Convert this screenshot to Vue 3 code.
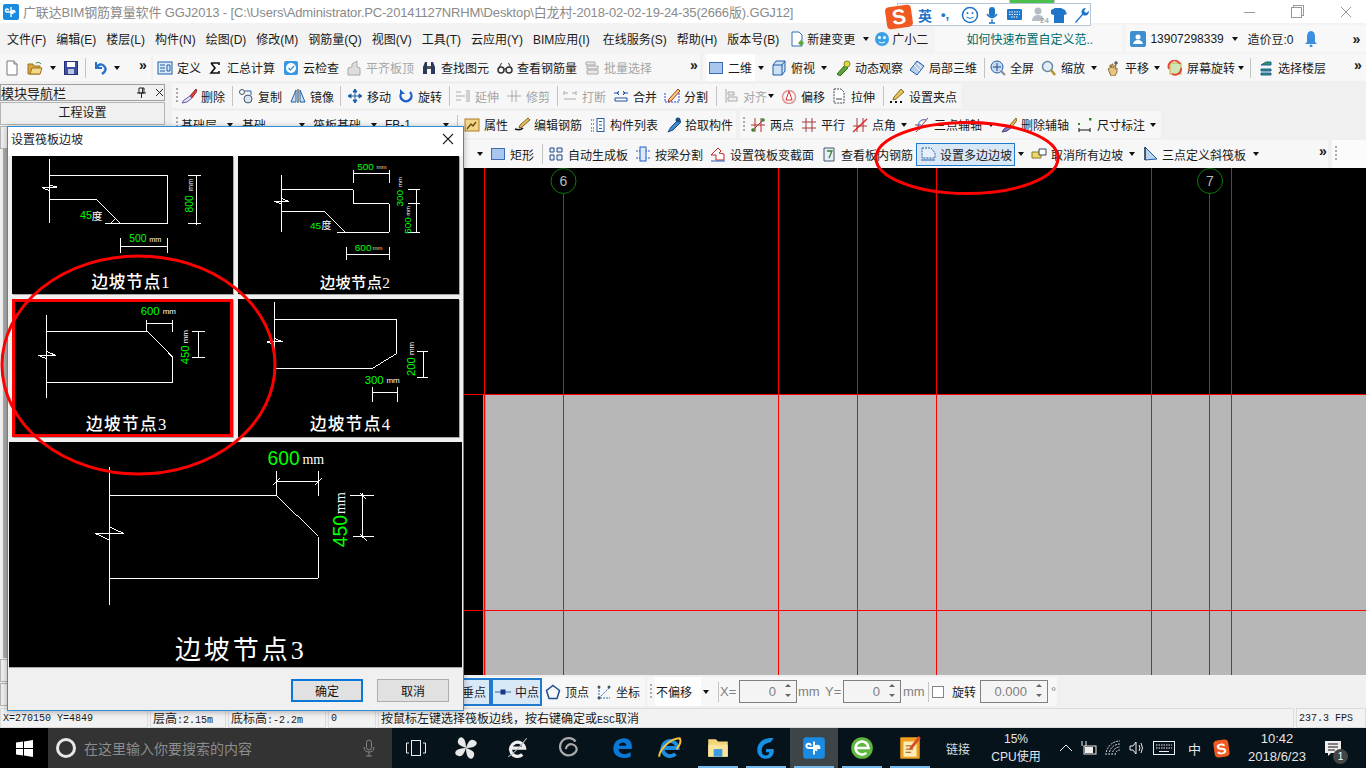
<script setup>
// small helpers for the toolbar tables, x is where the item starts on screen
const t = (x, i, text, o = {}) => ({ x, i, text, ...o })
const off = (x, i, text) => t(x, i, text, { cls: 'dis' })
const a = (x) => ({ x, cls: 'arr' })
const s = (x) => ({ x, cls: 'sep' })
const g = (x) => ({ x, cls: 'grip' })
const m = (x) => ({ x, cls: 'more' })
const inp = (x, val, w) => ({ x, val, w, cls: 'inp' })

function place(start, bars) {
  let cur = start
  return bars.map((b) => {
    const items = b.items.map((it, n) => {
      const next = n + 1 < b.items.length ? b.items[n + 1].x : b.end
      const w = it.w ?? next - it.x
      return { ...it, w, mr: next - it.x - w }
    })
    const out = { ...b, items, ml: b.x - cur, pad: items[0].x - b.x, width: b.end - b.x }
    cur = b.end
    return out
  })
}

const rows = [
  { cls: 'r1', bars: place(0, [
    { x: 0, end: 151, items: [t(4, 'new'), t(27, 'open'), a(50), t(63, 'save'), s(85), t(92, 'undo'), a(114), m(139)] },
    { x: 153, end: 700, items: [
      t(157, 'define', '定义'), t(207, 'sigma', '汇总计算'), t(283, 'cloud', '云检查'), off(346, 'flush', '平齐板顶'),
      t(421, 'binoc', '查找图元'), t(497, 'glass', '查看钢筋量'), off(584, 'batch', '批量选择'), m(690)] },
    { x: 703, end: 1366, items: [
      t(707, 'square', '二维', { cls: 'white', w: 48 }), a(758), t(771, 'cube', '俯视'), a(821), t(835, 'orbit', '动态观察'),
      t(909, 'local', '局部三维'), s(984), t(990, 'full', '全屏'), t(1041, 'zoom', '缩放'), a(1091), t(1105, 'hand', '平移'), a(1154),
      t(1167, 'turn', '屏幕旋转'), a(1238), s(1250), t(1258, 'floors', '选择楼层'), m(1354)] },
  ]) },
  { cls: 'r2', bars: place(165, [
    { x: 172, end: 961, items: [
      g(176), t(181, 'brush', '删除'), s(232), t(238, 'copy', '复制'), t(290, 'mirror', '镜像'), s(340), t(347, 'move', '移动'),
      t(398, 'rotate', '旋转'), s(449), off(455, 'extend', '延伸'), off(506, 'trim', '修剪'), s(557), off(562, 'break', '打断'),
      t(613, 'merge', '合并'), t(664, 'split', '分割'), s(716), off(723, 'align', '对齐'), a(768), t(781, 'offset', '偏移'),
      t(831, 'stretch', '拉伸'), s(883), t(889, 'gripp', '设置夹点')] },
  ]) },
  { cls: 'r3', bars: place(165, [
    { x: 172, end: 736, items: [
      g(176), t(181, null, '基础层'), a(227), t(242, null, '基础'), a(299), t(313, null, '筏板基础'), a(371), t(385, null, 'FB-1'), a(443), s(457),
      t(464, 'attr', '属性'), t(514, 'rebar', '编辑钢筋'), t(590, 'list', '构件列表'), t(665, 'pick', '拾取构件')] },
    { x: 740, end: 1161, items: [
      g(743), t(750, 'twopt', '两点'), t(801, 'para', '平行'), t(852, 'angle', '点角'), a(901), t(914, 'three', '三点辅轴'), a(988),
      t(1001, 'delax', '删除辅轴'), t(1077, 'dim', '尺寸标注'), a(1150)] },
  ]) },
  { cls: 'r4', bars: place(165, [
    { x: 172, end: 1328, items: [
      a(477), t(490, 'square', '矩形'), s(542), t(548, 'auto', '自动生成板'), t(635, 'beam', '按梁分割'), t(710, 'varsec', '设置筏板变截面'),
      t(821, 'view', '查看板内钢筋'), t(916, 'slope', '设置多边边坡', { cls: 'on', w: 99 }), a(1018), t(1031, 'cancel', '取消所有边坡'), a(1129),
      t(1142, 'tri', '三点定义斜筏板'), a(1253), m(1319)] },
    { x: 1332, end: 1366, cls: 'pale', items: [g(1335)] },
  ]) },
  { cls: 'r5', bars: place(165, [
    { x: 440, end: 645, items: [
      t(440, null, '垂点', { cls: 'on snap', w: 51 }), t(491, 'mid', '中点', { cls: 'on', w: 51 }), t(545, 'vertex', '顶点'), t(596, 'coord', '坐标')] },
    { x: 647, end: 1057, items: [
      g(650), t(655, null, '不偏移', { cls: 'white', w: 46 }), a(703), s(718), t(720, null, 'X=', { cls: 'gr' }), inp(739, '0', 58),
      t(798, null, 'mm', { cls: 'gr' }), t(825, null, 'Y=', { cls: 'gr' }), inp(843, '0', 58), t(903, null, 'mm', { cls: 'gr' }), s(928),
      { x: 932, cls: 'chk', w: 12 }, t(952, null, '旋转'), inp(980, '0.000', 68), t(1051, null, '°', { cls: 'gr' })] },
  ]) },
]

const menus = ['文件(F)', '编辑(E)', '楼层(L)', '构件(N)', '绘图(D)', '修改(M)', '钢筋量(Q)', '视图(V)', '工具(T)', '云应用(Y)', 'BIM应用(I)', '在线服务(S)', '帮助(H)', '版本号(B)']

const b = '#1f5fa8', k = '#333', gy = '#aaa'
const icons = {
  new: '<path d="M3 1h7l3 3v11H3z" fill="#fff" stroke="#777"/><path d="M10 1v3h3" fill="#ddd" stroke="#777"/>',
  open: '<path d="M1 4h5l1 2h6v8H1z" fill="#d9a53c" stroke="#9a7420"/><path d="M3 14l2-6h10l-2 6z" fill="#f5d788" stroke="#9a7420"/><path d="M9 3q3-2 5 1" fill="none" stroke="#3a8a3a"/>',
  save: '<rect x="1.5" y="1.5" width="13" height="13" fill="#3d4ea5" stroke="#262f75"/><rect x="4" y="2" width="8" height="5" fill="#fff"/><rect x="5" y="9" width="6" height="5" fill="#b9c5e2"/>',
  undo: `<path d="M4 2v6h6" fill="none" stroke="#2a70c8" stroke-width="2"/><path d="M4 8q4-6 8-2t-2 8" fill="none" stroke="#2a70c8" stroke-width="2.4"/>`,
  define: `<rect x="1" y="2" width="14" height="12" fill="#dce8f6" stroke="${b}"/><path d="M3 5h5M3 8h5M3 11h5M10 5h3v6h-3z" fill="none" stroke="${b}"/>`,
  sigma: `<path d="M4 3h8v2M4 3l4 5-4 5h8v-2" fill="none" stroke="#111" stroke-width="1.6"/>`,
  cloud: '<rect x="1" y="1" width="14" height="14" rx="2" fill="#3a97e0"/><circle cx="8" cy="8" r="5" fill="#fff"/><path d="M5.5 8l2 2 3.5-4" fill="none" stroke="#3a97e0" stroke-width="1.4"/>',
  flush: `<path d="M2 15V8l4-1V4l5-3v6l3 1v7z" fill="#ddd" stroke="${gy}"/>`,
  binoc: `<path d="M2 14V7l2-5h2v12zM14 14V7l-2-5h-2v12z" fill="#2b3a5a"/><path d="M6 6h4v3H6z" fill="#555"/>`,
  glass: `<circle cx="4" cy="10" r="3" fill="none" stroke="${k}" stroke-width="1.5"/><circle cx="12" cy="10" r="3" fill="none" stroke="${k}" stroke-width="1.5"/><path d="M7 9h2M1.500 9l3-6M14.500 9l-3-6" stroke="${k}" fill="none"/>`,
  batch: `<path d="M2 2h9v3H2zM3 6h11v3H3zM3 10h11v4H3z" fill="#e8e8e8" stroke="${gy}"/>`,
  square: '<rect x="1.500" y="2.500" width="13" height="11" fill="#a9c6ee" stroke="#3a6db5"/>',
  cube: `<path d="M2 5l3-4h9v10l-3 4H2z" fill="#cfe0f2" stroke="${b}"/><path d="M2 5h9v10M11 5l3-4" fill="none" stroke="${b}"/>`,
  orbit: '<path d="M2 14l8-9 3 3-8 8z" fill="#5da53a" stroke="#2f6f1e"/><circle cx="12" cy="4" r="3" fill="#e2d94a" stroke="#7b8a1e"/>',
  local: `<path d="M8 1l7 5-7 9-7-5z" fill="#b8cfea" stroke="${b}"/><path d="M4 4l7 7M8 3l5 5" stroke="#fff"/>`,
  full: `<circle cx="7" cy="7" r="6" fill="#c8daf0" stroke="${b}"/><path d="M7 3v8M3 7h8" stroke="#1f4f8f"/><path d="M11 11l4 4" stroke="#888" stroke-width="2"/>`,
  zoom: `<circle cx="6.500" cy="6.500" r="5" fill="#e3edf8" stroke="#6d87a5" stroke-width="1.500"/><path d="M10 10l4 5" stroke="#b3942f" stroke-width="2.500"/>`,
  hand: '<path d="M3 9l2-1V5h1v3l1-4h1v4l2-3h1l-1 4 2-1v4l-2 4H6z" fill="#e2c285" stroke="#94733a"/><path d="M11 1v4M9 3h4" stroke="#333"/>',
  turn: '<rect x="3" y="3" width="11" height="11" fill="#cfe6b8" stroke="#c9a63a"/><path d="M2 9a6 6 0 0 1 11-5" fill="none" stroke="#e0463c" stroke-width="1.800"/><path d="M14 8a6 6 0 0 1-9 6" fill="none" stroke="#e0463c" stroke-width="1.800"/>',
  floors: `<path d="M3 5l5-3h5v3zM3 9h10v2H3zM3 13h10v2H3z" fill="#2f9a4c" stroke="${b}"/>`,
  brush: `<path d="M15 1l-6 7 2 2 5-7z" fill="#d44" stroke="#922"/><path d="M9 8l-6 4-2 3 5-1 5-4z" fill="#e6dff3" stroke="#6a5aa0"/>`,
  copy: `<circle cx="4" cy="4" r="2.500" fill="none" stroke="#456"/><circle cx="10" cy="11" r="4" fill="#dbe6f3" stroke="#456"/><path d="M7 3h6v4" fill="none" stroke="${b}"/>`,
  mirror: `<path d="M6 2v12H1zM10 2v12h5z" fill="#cfe0f2" stroke="${b}"/><path d="M8 1v14" stroke="#333"/>`,
  move: `<path d="M8 1v14M1 8h14M8 1L6 4h4zM8 15l-2-3h4zM1 8l3-2v4zM15 8l-3-2v4z" fill="${b}" stroke="${b}"/>`,
  rotate: '<path d="M12 4a5.500 5.500 0 1 1-8 0" fill="none" stroke="#1f5fc8" stroke-width="2.400"/><path d="M2 1v5h5z" fill="#1f5fc8"/>',
  extend: `<path d="M1 4h5M1 8h9M1 12h5M12 2v12M14 2v12" stroke="${gy}" fill="none"/>`,
  trim: `<path d="M1 8h14M6 2v12M10 2v12" stroke="${gy}" fill="none"/>`,
  break: `<path d="M2 5h4M10 5h4M2 11h12M2 3v4M14 3v4" stroke="${gy}" fill="none"/>`,
  merge: `<path d="M1 5h5M10 5h5M6 3l-2 2 2 2M10 3l2 2-2 2" stroke="#1a4fa0" fill="none"/><path d="M2 10h12v3H2z" fill="#fff" stroke="#1a4fa0"/>`,
  split: '<path d="M1 14h14M1 5v9M15 5v9" stroke="#1a4fe0" fill="none" stroke-dasharray="2 1"/><path d="M14 1l-9 10-1 3 3-1 9-10z" fill="#f1d37a" stroke="#a33"/>',
  align: `<path d="M3 1v14M5 4h6v3H5zM5 9h9v4H5z" stroke="${gy}" fill="#eee"/>`,
  offset: '<path d="M5 12l3-9 3 9z" fill="#fff" stroke="#d33"/><circle cx="8" cy="9" r="6.500" fill="none" stroke="#d99" stroke-width="1.500"/>',
  stretch: `<path d="M3 1h7l3 3v11H3z" fill="#fff" stroke="#345" stroke-dasharray="2 1"/><path d="M5 11h6" stroke="#345"/>`,
  gripp: '<path d="M12 1l3 3-8 7-3 1 1-3z" fill="#e6c25a" stroke="#8a6a20"/><path d="M1 14h2M6 14h2M11 14h2" stroke="#111" stroke-width="2"/>',
  attr: '<rect x="1" y="2" width="14" height="12" fill="#f3d588" stroke="#a97c26"/><path d="M3 12l4-5 2 2 3-4" fill="none" stroke="#6b4a12" stroke-width="1.400"/>',
  rebar: '<path d="M1 12c3 1 6 1 8-1" fill="none" stroke="#111" stroke-width="1.400"/><path d="M14 1l2 2-8 7-3 1 1-3z" fill="#e3bd5e" stroke="#8b5f1d"/>',
  list: `<path d="M1 3h3M1 7h3M1 11h3M1 14h3" stroke="${k}" stroke-dasharray="1 1" fill="none"/><rect x="7" y="1.500" width="7" height="13" fill="#fff" stroke="${b}"/><path d="M9 4.500h3M9 8h3M9 11.500h3" stroke="${b}"/>`,
  pick: `<path d="M14 2l-8 8-3 5 5-2 8-8z" fill="#3f8bd0" stroke="#1a4f80"/><circle cx="13" cy="3" r="2.500" fill="#1a4f80"/>`,
  twopt: `<path d="M2 14L14 2M5 1v14M11 1v14M1 8h14" stroke="#b03030" fill="none"/><circle cx="3" cy="13" r="1.800" fill="#2c8a2c"/><circle cx="13" cy="3" r="1.800" fill="#2c8a2c"/>`,
  para: '<path d="M5 1v14M11 1v14M1 5h14M1 11h14" stroke="#a43a3a" fill="none"/>',
  angle: '<path d="M5 1v14M11 1v14M1 9h14" stroke="#a43a3a" fill="none"/><path d="M1 15L15 2" stroke="#e02020" stroke-width="1.300"/>',
  three: '<path d="M2 15L14 1M1 8h6" stroke="#a43a3a" fill="none"/><path d="M6 13A6 6 0 0 1 12 3" fill="none" stroke="#1f5fc8"/>',
  delax: '<path d="M15 1l-6 7 2 2 5-7z" fill="#e3bd5e" stroke="#8b5f1d"/><path d="M9 8l-6 4-2 3 5-1 5-4z" fill="#8e7ac0" stroke="#4a3a80"/>',
  dim: `<path d="M2 11v4M13 11v4M2 13h11" stroke="#111" fill="none"/><rect x="1" y="6" width="2" height="2" fill="#2c8a2c"/><rect x="12" y="1" width="2.500" height="2.500" fill="#2c8a2c"/>`,
  auto: `<path d="M2 2h4v4H2zM9 2h5v4H9zM2 9h4v5H2zM9 9h5v5H9z" fill="#e8eef7" stroke="#234a86"/>`,
  beam: `<path d="M1 5h14M1 12h14" stroke="#1a5fc8" stroke-dasharray="2 1" fill="none"/><rect x="5" y="1" width="6" height="14" fill="#dce8f6" stroke="#1a5fc8"/>`,
  varsec: '<path d="M1 9l7-7 3 3-2 2 5 1v6H6V9z" fill="#fff" stroke="#c22"/><path d="M1 15h14" stroke="#1f5fc8"/>',
  view: `<path d="M3 2h10v13H3z" fill="#e6eef6" stroke="#456"/><path d="M6 5h5l-3 7" fill="none" stroke="#3a7a3a" stroke-width="1.300"/>`,
  slope: '<path d="M2 2h9l4 5v5H2z" fill="#e6f0fb" stroke="#2a5f9f" stroke-dasharray="2 1"/><path d="M1 14h14" stroke="#2a5f9f"/>',
  cancel: '<path d="M1 6h9v6H1z" fill="#ecd76a" stroke="#8b7a20"/><path d="M8 3h7v6H8z" fill="#fff" stroke="#345"/>',
  tri: `<path d="M3 1v13l12-1z" fill="#b9d2ee" stroke="${b}"/><path d="M3 1v13" stroke="#111"/>`,
  mid: '<path d="M0 8h16" stroke="#6d8fc0" stroke-width="1.500"/><rect x="5.500" y="5.500" width="5" height="5" fill="#16378a"/>',
  vertex: `<path d="M8 1.500l6.500 5-2.500 8H4l-2.500-8z" fill="none" stroke="#1a4f90" stroke-width="1.500"/>`,
  coord: `<path d="M3 14l10-10M3 3v11h11" stroke="#2a6fc0" stroke-dasharray="2 1" fill="none"/><circle cx="3" cy="3" r="1.500" fill="#456"/><circle cx="13" cy="3" r="1.500" fill="#456"/><circle cx="3" cy="14" r="1.500" fill="#456"/>`,
}

// drawings use the same numbers as the reference crop at 3x, hence stroke 3
const thumbs = [
  { vb: '36 92 663 415', d: 'M148 102V293M148 151H503V295H316M148 223H290L360 295M124 187H172M148 180L172 186M124 187L148 196M333 293L347 279M361 340V383M503 340V383M361 365H503M590 150V298M565 151H605M565 295H605',
    tx: [{ t: '45', x: 240, y: 281, s: 32, c: '#0f0' }, { t: '度', x: 275, y: 283, s: 32 }, { t: '500', x: 388, y: 351, s: 31, c: '#0f0' }, { t: 'mm', x: 448, y: 351, s: 22 }, { t: '800', x: 581, y: 262, s: 31, c: '#0f0', r: 1 }, { t: 'mm', x: 580, y: 197, s: 22, r: 1 }],
    label: { t: '边坡节点1', x: 274, y: 490, s: 50, ls: 2.5 } },
  { vb: '714 92 664 415', d: 'M844 148V320M844 193H1060V235H1169V322H1012M844 259H975L1037 322M822 228H866M844 220L866 228M822 228L844 236M1060 135V172M1169 135V172M1060 146H1169M1039 365V404M1169 365V404M1039 388H1169M1250 190V325M1225 193H1262M1225 235H1262M1225 322H1262',
    tx: [{ t: '45', x: 930, y: 312, s: 30, c: '#0f0' }, { t: '度', x: 965, y: 313, s: 30 }, { t: '500', x: 1072, y: 135, s: 30, c: '#0f0' }, { t: 'mm', x: 1130, y: 131, s: 18, c: '#ffd9a0' }, { t: '600', x: 1065, y: 377, s: 30, c: '#0f0' }, { t: 'mm', x: 1118, y: 374, s: 18, c: '#ffd9a0' }, { t: '300', x: 1209, y: 244, s: 30, c: '#0f0', r: 1 }, { t: 'mm', x: 1207, y: 185, s: 18, r: 1 }, { t: '500', x: 1233, y: 326, s: 30, c: '#0f0', r: 1 }, { t: 'mm', x: 1232, y: 272, s: 18, r: 1 }],
    label: { t: '边坡节点2', x: 960, y: 490, s: 46, ls: 1 } },
  { vb: '36 522 663 414', sel: true, d: 'M139 570V818M139 619H442L518 696V772H139M115 691H167M139 679L167 691M115 691L139 701M440 585V620M518 585V620M440 594H518M595 619V698M575 619H615M575 698H615',
    tx: [{ t: '600', x: 422, y: 570, s: 34, c: '#0f0' }, { t: 'mm', x: 488, y: 566, s: 24 }, { t: '450', x: 568, y: 718, s: 34, c: '#0f0', r: 1 }, { t: 'mm', x: 565, y: 655, s: 24, r: 1 }],
    label: { t: '边坡节点3', x: 258, y: 916, s: 50, ls: 4 } },
  { vb: '714 522 664 414', d: 'M823 530V730M823 582H1190V686L1118 730H823M800 650H848M823 640L848 650M800 650L823 660M1117 785V830M1192 785V830M1117 802H1192M1271 680V757M1252 680H1286M1252 757H1286',
    tx: [{ t: '300', x: 1095, y: 776, s: 34, c: '#0f0' }, { t: 'mm', x: 1160, y: 774, s: 24 }, { t: '200', x: 1247, y: 753, s: 34, c: '#0f0', r: 1 }, { t: 'mm', x: 1244, y: 690, s: 24, r: 1 }],
    label: { t: '边坡节点4', x: 930, y: 916, s: 50, ls: 4 } },
]
const big = {
  vb: '28 6 1358 676', d: 'M328 82V497M328 166H830L956 290V415H328M286 281H372M330 262L372 281M286 281L328 300M830 93V168M956 93V168M830 125H956M820 135L840 115M946 135L966 115M1088 160V295M1050 166H1122M1060 290H1122M1080 158L1100 178M1080 282L1100 302',
  tx: [{ t: '600', x: 803, y: 76, s: 58, c: '#0f0' }, { t: 'mm', x: 908, y: 73, s: 42, f: 1 }, { t: '450', x: 1041, y: 322, s: 58, c: '#0f0', r: 1 }, { t: 'mm', x: 1036, y: 222, s: 42, r: 1, f: 1 }],
  label: { t: '边坡节点3', x: 525, y: 658, s: 78, ls: 9 },
}

const vLines = [[484, 168], [563, 194], [778, 168], [857, 168], [936, 168], [1151, 168], [1209, 194], [1231, 168]]
const axes = [{ x: 563.5, n: '6' }, { x: 1210, n: '7' }]

const tasks = [
  { ml: 0, svg: '<path d="M12 12C6 10 3 8 5 4s7-2 7 8zM12 12c2-6 4-9 8-7s2 7-8 7zM12 12c6 2 9 4 7 8s-7 2-7-8zM12 12c-2 6-4 9-8 7s-2-7 8-7z" fill="#e8e8e8"/>' },
  { ml: 4, svg: '<path d="M5 12h13a6.500 6.500 0 1 0-2 6" fill="none" stroke="#eee" stroke-width="3"/><path d="M3 20Q10 16 20 3" fill="none" stroke="#bbb" stroke-width="1"/>' },
  { ml: 2, svg: '<path d="M19 6A8 8 0 1 0 20 14 5 5 0 1 0 10 13" fill="none" stroke="#aaa" stroke-width="2"/>' },
  { ml: 6, svg: '<path d="M4 13C4 6 9 3 14 3c5 0 8 4 7 10H9c0 5 6 6 11 3v4c-8 3-16 0-16-7zM9 10h7c0-4-6-4-7 0z" fill="#0a78d7"/>' },
  { svg: '<path d="M5 12h14a7 7 0 1 0-2 5.500" fill="none" stroke="#1e8ee0" stroke-width="3.500"/><path d="M2 20C2 14 12 3 21 3c2 3-1 8-3 10" fill="none" stroke="#f2c43a" stroke-width="1.800"/>' },
  { run: 'run', svg: '<path d="M3 4h7l2 2h9v14H3z" fill="#f4d77a"/><path d="M3 9h18v11H3z" fill="#fbe59c"/><path d="M8 13h8v7H8z" fill="#3c9be0"/>' },
  { run: 'run', svg: '<path d="M19 3C10 2 4 7 4 14c0 5 4 8 8 8 5 0 8-4 7-9h-7v3h3c0 2-2 3-3 3-3 0-4-2-4-5 0-4 4-7 8-7l3-4z" fill="#1691e8"/>' },
  { run: 'run cur', svg: '<rect x="2" y="2" width="20" height="20" rx="3" fill="#1a8be0"/><path d="M12 6v12M12 12H7a2 2 0 1 1 2-2M12 12h5a2 2 0 1 0-2 2" fill="none" stroke="#fff" stroke-width="1.800"/>' },
  { run: 'run', svg: '<circle cx="12" cy="12" r="10" fill="#5fb73e"/><path d="M6 12h12a6 6 0 1 0-2 4.500" fill="none" stroke="#fff" stroke-width="2.400"/>' },
  { run: 'run', svg: '<rect x="3" y="2" width="18" height="20" rx="1" fill="#f0a020"/><rect x="6" y="6" width="12" height="14" fill="#fbedb8"/><path d="M8 10h7M8 13h7M8 16h5" stroke="#a87a30"/><path d="M20 1l2 2-8 10-3 1 1-3z" fill="#d8502a"/>' },
]
</script>

<template>
  <div class="page">
    <div class="title">
      <svg class="appicon" viewBox="0 0 16 16"><rect width="16" height="16" rx="2" fill="#1a8be0"/><path d="M8 3v10M8 8H4a1.500 1.500 0 1 1 1.500-1.500M8 8h4a1.500 1.500 0 1 0-1.500 1.500" fill="none" stroke="#fff" stroke-width="1.400"/></svg>
      <span class="title-txt">广联达BIM钢筋算量软件 GGJ2013 - [C:\Users\Administrator.PC-20141127NRHM\Desktop\白龙村-2018-02-02-19-24-35(2666版).GGJ12]</span>
      <div class="winbtns">
        <i class="min"></i>
        <i class="max"></i>
        <svg width="12" height="12" viewBox="0 0 12 12"><path d="M1 1l10 10M11 1L1 11" stroke="#999"/></svg>
      </div>
      <div class="greentab"></div>
      <div class="ime">
        <span class="s-logo">S</span>
        <b class="ime-en">英</b>
        <span class="ime-dot">•,</span>
        <svg width="132" height="20" viewBox="0 0 132 20" class="ime-icons">
          <circle cx="11" cy="10" r="7.500" fill="none" stroke="#1f76c8" stroke-width="1.500"/><circle cx="8.500" cy="8" r="1" fill="#1f76c8"/><circle cx="13.500" cy="8" r="1" fill="#1f76c8"/><path d="M7.500 12q3.500 3 7 0" fill="none" stroke="#1f76c8"/>
          <rect x="30" y="2" width="6" height="10" rx="3" fill="#1f76c8"/><path d="M28 9q5 7 10 0M33 14v4M30 18h6" fill="none" stroke="#1f76c8" stroke-width="1.300"/>
          <rect x="48" y="4" width="15" height="11" rx="1" fill="#1f76c8"/><path d="M50 7h11M50 9.500h11M52 12h7" stroke="#fff" stroke-dasharray="1.500 1"/>
          <circle cx="79" cy="6" r="3.500" fill="#b5bcc4"/><path d="M73 15q1-5 6-5t5 3v3H73z" fill="#b5bcc4"/><text x="81" y="18" font-size="8" fill="#8b939b" font-family="Liberation Sans">24</text>
          <path d="M92 5l4-2h6l4 2 2 4-3 1v8H95v-8l-3-1z" fill="#1f76c8"/>
          <path d="M116 17l7-8a4 4 0 0 1 4-6l-2 3 2 2 3-2a4 4 0 0 1-6 4l-7 8z" fill="#1f76c8"/>
        </svg>
      </div>
    </div>

    <div class="menubar">
      <span v-for="mi in menus" :key="mi" class="mi">{{ mi }}</span>
      <svg class="ic new-ic" viewBox="0 0 16 16"><path d="M3 1h7l3 3v11H3z" fill="#fff" stroke="#2a70b8"/><path d="M9 12l3-3 3 3-3 3z" fill="#5aa53a"/></svg>
      <span>新建变更</span>
      <i class="arrow gap-arrow"></i>
      <svg class="ic xiao" viewBox="0 0 16 16"><circle cx="8" cy="8" r="7" fill="#3aa0e8"/><circle cx="5.500" cy="6.500" r="1.500" fill="#fff"/><circle cx="10.500" cy="6.500" r="1.500" fill="#fff"/><path d="M5 11q3 2 6 0" stroke="#fff" fill="none"/></svg>
      <span>广小二</span>
      <div class="notice">如何快速布置自定义范..</div>
      <div class="account">
        <svg class="ic" viewBox="0 0 16 16"><rect width="16" height="16" rx="2" fill="#3f8fd0"/><circle cx="8" cy="6" r="2.500" fill="#fff"/><path d="M3 13q1-4 5-4t5 4z" fill="#fff"/></svg>
        <span class="acc-no">13907298339</span>
        <i class="arrow"></i>
        <span class="acc-beans">造价豆:0</span>
        <svg class="ic bell" viewBox="0 0 16 16"><path d="M8 0q4 0 4 6v5l2 2H2l2-2V6q0-6 4-6z" fill="#3a8fe0"/><circle cx="8" cy="15" r="1.500" fill="#3a8fe0"/></svg>
        <span class="acc-more">»</span>
      </div>
    </div>

    <div class="work">
      <aside class="side">
        <div class="side-head">
          <span>模块导航栏</span>
          <svg class="side-pin" width="9" height="11" viewBox="0 0 9 11"><path d="M2 1h5v5H2zM0 6h9M4.500 6v5M5.500 1v5" fill="none" stroke="#222"/></svg>
          <svg class="side-x" width="9" height="9" viewBox="0 0 9 9"><path d="M1 1l7 7M8 1L1 8" stroke="#222"/></svg>
        </div>
        <div class="side-btn">工程设置</div>
        <div class="side-btn"></div>
        <div class="side-list"></div>
        <div class="side-btn"></div>
        <div class="side-btn"></div>
      </aside>

      <div v-for="row in rows" :key="row.cls" class="row" :class="row.cls">
        <div
          v-for="bar in row.bars"
          :key="bar.x"
          class="bar"
          :class="bar.cls"
          :style="{ marginLeft: bar.ml + 'px', width: bar.width + 'px', paddingLeft: bar.pad + 'px' }"
        >
          <div
            v-for="it in bar.items"
            :key="it.x"
            class="item"
            :class="it.cls"
            :style="{ width: it.w + 'px', marginRight: it.mr + 'px' }"
          >
            <svg v-if="it.i" class="ic" viewBox="0 0 16 16" v-html="icons[it.i]"></svg>
            <span v-if="it.text">{{ it.text }}</span>
            <template v-if="it.val">
              <span class="val">{{ it.val }}</span>
              <span class="spin"><i></i><i></i></span>
            </template>
          </div>
        </div>
      </div>

      <div class="canvas">
        <svg width="1201" height="507" viewBox="165 168 1201 507" class="cad">
          <rect x="165" y="168" width="1201" height="507" fill="#000"/>
          <rect x="486" y="395" width="880" height="280" fill="#b7b7b7"/>
          <rect x="483" y="395" width="3" height="280" fill="#0f0"/>
          <path v-for="l in vLines" :key="l[0]" :d="`M${l[0] + 0.5} ${l[1]}V675`" stroke="#f00" shape-rendering="crispEdges"/>
          <path d="M165 394.500H1366M165 610.500H1366" stroke="#f00" shape-rendering="crispEdges"/>
          <g v-for="ax in axes" :key="ax.n">
            <circle :cx="ax.x" cy="181" r="12.500" fill="none" stroke="#0a7a0a"/>
            <text :x="ax.x" y="186" text-anchor="middle" font-size="14" fill="#bbb" font-family="Liberation Sans, sans-serif">{{ ax.n }}</text>
          </g>
        </svg>
      </div>
    </div>

    <div class="status">
      <div class="cell c1">X=270150 Y=4849</div>
      <div class="cell c2"><span class="cn">层高</span>:2.15m</div>
      <div class="cell c3"><span class="cn">底标高</span>:-2.2m</div>
      <div class="cell c4">0</div>
      <div class="cell c5"><span class="cn">按鼠标左键选择筏板边线，按右键确定或</span>ESC<span class="cn">取消</span></div>
      <div class="cell c6">237.3 FPS</div>
    </div>

    <div class="taskbar">
      <div class="start">
        <svg width="17" height="17" viewBox="0 0 17 17"><path d="M0 2.500L7 1.500V8H0zM8 1.400L17 0V8H8zM0 9H7V15.500L0 14.500zM8 9H17V17L8 15.600z" fill="#fff"/></svg>
      </div>
      <div class="search">
        <span class="ring"></span>
        <span class="search-txt">在这里输入你要搜索的内容</span>
        <svg class="search-mic" width="12" height="18" viewBox="0 0 12 18"><rect x="3.500" y="1" width="5" height="10" rx="2.500" fill="none" stroke="#888"/><path d="M1 8q0 5 5 5t5-5M6 13v4M3 17h6" fill="none" stroke="#888"/></svg>
      </div>
      <svg class="taskview" width="20" height="18" viewBox="0 0 20 18"><rect x="5.500" y="1.500" width="9" height="15" fill="none" stroke="#eee"/><path d="M3 4H.500v10H3M17 4h2.500v10H17" fill="none" stroke="#eee"/></svg>
      <div v-for="(tk, i) in tasks" :key="i" class="tile" :class="tk.run" :style="{ marginLeft: (tk.ml || 0) + 'px' }">
        <svg width="26" height="26" viewBox="0 0 24 24" v-html="tk.svg"></svg>
      </div>
      <span class="links">链接</span>
      <div class="cpu"><span>15%</span><span>CPU使用</span></div>
      <div class="tray">
        <svg width="14" height="8" viewBox="0 0 14 8"><path d="M1 7l6-6 6 6" fill="none" stroke="#eee"/></svg>
        <svg width="16" height="14" viewBox="0 0 16 14"><rect x="3" y="5" width="12" height="8" fill="#111" stroke="#eee"/><rect x="4" y="6" width="8" height="6" fill="#eee"/><path d="M1 0v5M5 0v5" stroke="#eee"/></svg>
        <svg width="16" height="16" viewBox="0 0 16 16"><path d="M1 15a14 14 0 0 1 14-14M4 15a11 11 0 0 1 11-11M7 15a8 8 0 0 1 8-8M10 15a5 5 0 0 1 5-5" fill="none" stroke="#ddd" stroke-dasharray="2 1"/></svg>
        <svg width="16" height="16" viewBox="0 0 16 16"><path d="M1 6h3l3-4v12l-3-4H1z" fill="none" stroke="#eee"/><path d="M10 5q2 3 0 6M12 3q3 5 0 10" fill="none" stroke="#eee"/></svg>
        <svg width="22" height="14" viewBox="0 0 22 14"><rect x=".500" y=".500" width="21" height="13" fill="none" stroke="#eee"/><path d="M3 4h16M3 7h16" stroke="#eee" stroke-dasharray="1.500 1"/><path d="M6 10.500h10" stroke="#eee"/></svg>
        <span class="tray-zh">中</span>
        <span class="s-logo small">S</span>
      </div>
      <div class="clock"><span>10:42</span><span>2018/6/23</span></div>
      <div class="note">
        <svg width="16" height="15" viewBox="0 0 16 15"><path d="M0 0h16v12H6l-3 3v-3H0z" fill="#eee"/><path d="M3 3h10M3 6h10M3 9h7" stroke="#111"/></svg>
        <span class="badge">1</span>
      </div>
    </div>

    <div class="dialog">
      <div class="dlg-title">
        <span>设置筏板边坡</span>
        <svg width="12" height="12" viewBox="0 0 12 12"><path d="M1 1l10 10M11 1L1 11" stroke="#222" stroke-width="1.100"/></svg>
      </div>
      <div class="thumbs">
        <div v-for="p in thumbs" :key="p.vb" class="panel" :class="{ sel: p.sel }">
          <svg :viewBox="p.vb" class="draw">
            <path :d="p.d" fill="none" stroke="#fff" stroke-width="3" shape-rendering="crispEdges"/>
            <text
              v-for="x in p.tx"
              :key="x.t + x.x"
              :x="x.x"
              :y="x.y"
              :font-size="x.s"
              :fill="x.c || '#fff'"
              :transform="x.r ? `rotate(-90 ${x.x} ${x.y})` : null"
            >{{ x.t }}</text>
            <text :x="p.label.x" :y="p.label.y" :font-size="p.label.s" :letter-spacing="p.label.ls" fill="#fff" class="serif heavy">{{ p.label.t }}</text>
          </svg>
        </div>
      </div>
      <div class="preview">
        <svg :viewBox="big.vb" class="draw">
          <path :d="big.d" fill="none" stroke="#fff" stroke-width="3" shape-rendering="crispEdges"/>
          <text
            v-for="x in big.tx"
            :key="x.t + x.x"
            :x="x.x"
            :y="x.y"
            :font-size="x.s"
            :fill="x.c || '#fff'"
            :class="{ serif: x.f }"
            :transform="x.r ? `rotate(-90 ${x.x} ${x.y})` : null"
          >{{ x.t }}</text>
          <text :x="big.label.x" :y="big.label.y" :font-size="big.label.s" :letter-spacing="big.label.ls" fill="#fff" class="serif">{{ big.label.t }}</text>
        </svg>
      </div>
      <div class="dlg-foot">
        <button class="btn primary">确定</button>
        <button class="btn">取消</button>
      </div>
    </div>

    <svg class="marks" width="1366" height="768" viewBox="0 0 1366 768">
      <ellipse cx="138.500" cy="365" rx="136.500" ry="109" fill="none" stroke="#f00" stroke-width="3"/>
      <ellipse cx="967" cy="158" rx="91" ry="35.500" fill="none" stroke="#f00" stroke-width="3"/>
    </svg>
  </div>
</template>

<style scoped>
.page {
  position: relative;
  width: 1366px;
  height: 768px;
  overflow: hidden;
  background: #f0f0f0;
  color: #1a1a1a;
  font: 12px "Liberation Sans", "Noto Sans CJK SC", sans-serif;
}

.title {
  position: relative;
  display: flex;
  align-items: center;
  height: 23px;
  padding-left: 3px;
  background: #fff;
  color: #8a8a8a;
  font-size: 13px;
  white-space: nowrap;
}
.title-txt {
  letter-spacing: -0.15px;
}
.appicon {
  width: 16px;
  height: 16px;
  margin-right: 4px;
}
.winbtns {
  position: absolute;
  top: 6px;
  left: 1244px;
  display: flex;
  align-items: center;
  gap: 36px;
}
.min {
  width: 11px;
  border-top: 1px solid #999;
}
.max {
  width: 9px;
  height: 9px;
  border: 1px solid #999;
  box-shadow: 2px -2px 0 -1px #fff, 2px -2px 0 0 #999;
}
.winbtns svg {
  margin-left: 2px;
}
.greentab {
  position: absolute;
  top: 0;
  left: 1009px;
  width: 44px;
  height: 4px;
  background: #4cc04c;
  border: 1px solid #bbb;
  border-top: 0;
  border-radius: 0 0 4px 4px;
}
.ime {
  position: absolute;
  top: 3px;
  left: 897px;
  display: flex;
  align-items: center;
  width: 194px;
  height: 23px;
  background: #fff;
  border: 1px solid #b4c6d8;
  box-sizing: border-box;
}
.s-logo {
  position: absolute;
  top: 2px;
  left: -12px;
  width: 26px;
  height: 22px;
  border-radius: 4px;
  background: #f05a22;
  color: #fff;
  font: bold 21px/22px "Liberation Sans", sans-serif;
  text-align: center;
  transform: rotate(-8deg);
}
.s-logo.small {
  position: static;
  width: 15px;
  height: 17px;
  margin-left: 5px;
  font-size: 15px;
  line-height: 17px;
}
.ime-en {
  margin-left: 20px;
  color: #1f76c8;
  font-size: 14px;
}
.ime-dot {
  margin-left: 9px;
  color: #1f76c8;
  font-weight: bold;
}
.ime-icons {
  flex: none;
  margin-left: 10px;
}

.menubar {
  display: flex;
  align-items: center;
  height: 31px;
  padding-left: 7px;
  background: #f3f3f3;
  white-space: nowrap;
}
.mi {
  margin-right: 10px;
}
.mi:nth-child(11) {
  margin-right: 13px;
}
.ic {
  flex: none;
  width: 16px;
  height: 16px;
  margin-right: 4px;
}
.new-ic {
  margin-right: 2px;
}
.arrow {
  width: 0;
  height: 0;
  border: 3px solid transparent;
  border-top: 4px solid #111;
  border-bottom: 0;
}
.gap-arrow {
  margin: 0 5px 0 8px;
}
.xiao {
  margin-right: 2px;
}
.notice {
  display: flex;
  align-items: center;
  width: 156px;
  height: 27px;
  margin-left: 7px;
  padding-left: 31px;
  background: #f8f8f8;
  color: #006b6b;
}
.account {
  display: flex;
  align-items: center;
  flex: 1;
  height: 27px;
  margin-left: 4px;
  padding-left: 4px;
  background: #f8f8f8;
}
.account .ic {
  margin-right: 4px;
}
.acc-no {
  width: 82px;
}
.acc-beans {
  margin-left: 9px;
}
.bell {
  margin-left: 10px;
}
.acc-more {
  margin-left: 29px;
  font: bold 14px "Liberation Sans", sans-serif;
}

.work {
  display: grid;
  grid-template-columns: 165px 1201px;
  grid-template-rows: 30px 27px 29px 28px 507px 33px;
  height: 654px;
}
.r1 {
  grid-column: 1 / 3;
  grid-row: 1;
}
.r2 { grid-column: 2; grid-row: 2; }
.r3 { grid-column: 2; grid-row: 3; }
.r4 { grid-column: 2; grid-row: 4; }
.r5 { grid-column: 2; grid-row: 6; }
.canvas {
  grid-column: 2;
  grid-row: 5;
}
.cad {
  display: block;
}

.side {
  grid-column: 1;
  grid-row: 2 / 7;
  display: flex;
  flex-direction: column;
  padding-bottom: 2px;
}
.side-head {
  display: flex;
  align-items: center;
  height: 15px;
  border: 1px solid #a0a0a0;
  font-size: 13px;
  white-space: nowrap;
}
.side-pin {
  margin-left: 71px;
}
.side-x {
  margin-left: 9px;
}
.side-btn {
  flex: none;
  height: 21px;
  margin-top: 1px;
  line-height: 21px;
  text-align: center;
  background: #f0f0f0;
  border: 1px solid #b4b4b4;
}
.side-list {
  flex: 1;
  margin-left: 3px;
  background: #ababab;
}

.row {
  display: flex;
  align-items: flex-start;
}
.bar {
  display: flex;
  align-items: center;
  flex: none;
  box-sizing: border-box;
  background: #f7f7f7;
  white-space: nowrap;
}
.r1 .bar { height: 27px; }
.r2 .bar { height: 24px; }
.r3 .bar { height: 27px; }
.r4 .bar { height: 28px; }
.r5 .bar { height: 29px; margin-top: 2px; }
.pale {
  background: #fbfbfb;
}
.item {
  display: flex;
  align-items: center;
  flex: none;
  box-sizing: border-box;
  height: 100%;
}
.dis {
  color: #a5a5a5;
}
.gr {
  color: #808080;
  font-size: 13px;
}
.white {
  background: #fff;
  padding-left: 1px;
}
.on {
  height: 23px;
  padding-left: 3px;
  background: #d9e8f6;
  border: 1px solid #1f7ad0;
}
.r5 .on {
  height: 28px;
  border-width: 2px;
  padding-left: 2px;
}
.snap {
  justify-content: flex-end;
  padding-right: 3px;
}
.arr::before {
  content: "";
  width: 0;
  height: 0;
  border: 3px solid transparent;
  border-top: 4px solid #111;
  border-bottom: 0;
}
.sep::before {
  content: "";
  width: 1px;
  height: 20px;
  background: #c4c4c4;
}
.grip::before {
  content: "";
  width: 2px;
  height: 16px;
  background: repeating-linear-gradient(#aaa 0 2px, transparent 2px 4px);
}
.more::before {
  content: "»";
  font: bold 14px "Liberation Sans", sans-serif;
  margin-top: -6px;
}
.inp {
  position: relative;
  justify-content: flex-end;
  height: 23px;
  padding-right: 20px;
  background: #f4f4f4;
  border: 1px solid #808080;
}
.val {
  color: #808080;
  font-size: 13px;
}
.spin {
  position: absolute;
  top: 3px;
  right: 5px;
  display: flex;
  flex-direction: column;
  gap: 7px;
}
.spin i {
  width: 0;
  height: 0;
  border: 3px solid transparent;
  border-bottom: 3px solid #666;
  border-top: 0;
}
.spin i + i {
  border-top: 3px solid #666;
  border-bottom: 0;
}
.chk::before {
  content: "";
  width: 10px;
  height: 10px;
  background: #fff;
  border: 1px solid #888;
}

.status {
  display: flex;
  height: 20px;
  gap: 2px;
  font: 10px/19px "Liberation Mono", "Noto Sans CJK SC", monospace;
}
.cell {
  box-sizing: border-box;
  padding-left: 2px;
  background: #f2f2f2;
  border: 1px solid #dcdcdc;
  white-space: nowrap;
}
.cn {
  font: 12px "Liberation Sans", "Noto Sans CJK SC", sans-serif;
}
.c1 { width: 148px; }
.c2 { width: 76px; }
.c3 { width: 98px; }
.c4 { width: 48px; }
.c5 { width: 916px; }
.c6 { flex: 1; }

.taskbar {
  display: flex;
  align-items: center;
  height: 40px;
  background: #07131a;
  color: #e6e6e6;
  white-space: nowrap;
}
.start {
  display: flex;
  align-items: center;
  justify-content: center;
  align-self: stretch;
  width: 48px;
  background: #000;
}
.search {
  display: flex;
  align-items: center;
  align-self: stretch;
  width: 344px;
  background: #333;
}
.ring {
  box-sizing: border-box;
  width: 20px;
  height: 20px;
  margin-left: 8px;
  border: 3px solid #e8e8e8;
  border-radius: 50%;
}
.search-txt {
  margin-left: 8px;
  color: #8c8c8c;
  font-size: 14px;
}
.search-mic {
  margin-left: 111px;
}
.taskview {
  flex: none;
  margin: 0 16px 0 14px;
}
.tile {
  position: relative;
  display: flex;
  align-items: center;
  justify-content: center;
  align-self: stretch;
  flex: none;
  width: 48px;
}
.run::after {
  content: "";
  position: absolute;
  left: 4px;
  right: 4px;
  bottom: 0;
  height: 2px;
  background: #76b9ed;
}
.cur {
  background: #3d4549;
}
.links {
  width: 30px;
  margin-left: 12px;
  color: #ddd;
}
.cpu {
  display: flex;
  flex-direction: column;
  align-items: center;
  width: 50px;
  margin-left: 15px;
  line-height: 18px;
}
.tray {
  display: flex;
  align-items: center;
  gap: 8px;
  margin-left: 18px;
}
.tray-zh {
  margin-left: 5px;
  font-size: 13px;
}
.clock {
  display: flex;
  flex-direction: column;
  align-items: center;
  width: 62px;
  margin-left: 17px;
  font-size: 13px;
  line-height: 18px;
}
.note {
  position: relative;
  margin-left: 17px;
}
.note svg {
  display: block;
}
.badge {
  position: absolute;
  top: 8px;
  left: 8px;
  width: 15px;
  height: 15px;
  border-radius: 50%;
  background: #444;
  color: #fff;
  font-size: 10px;
  line-height: 15px;
  text-align: center;
}

.dialog {
  position: absolute;
  top: 126px;
  left: 7px;
  box-sizing: border-box;
  width: 457px;
  height: 585px;
  background: #f0f0f0;
  border: 1px solid #2b90d9;
  box-shadow: 0 1px 6px rgba(0, 0, 0, 0.3);
}
.dlg-title {
  display: flex;
  align-items: center;
  justify-content: space-between;
  box-sizing: border-box;
  height: 29px;
  padding: 0 9px 6px 3px;
  background: #fff;
}
.thumbs {
  display: grid;
  grid-template-columns: 221px 221px;
  grid-template-rows: 138px 138px;
  gap: 5px;
  padding: 0 3px 5px 4px;
}
.panel {
  background: #000;
  box-shadow: 1px 1px 0 #a8a8a8;
}
.sel {
  outline: 3px solid #f00;
  outline-offset: -3px;
}
.draw {
  display: block;
  width: 100%;
  height: 100%;
  font-family: "Liberation Sans", "Noto Sans CJK SC", sans-serif;
}
.serif {
  font-family: "Liberation Serif", "Noto Sans CJK SC", serif;
}
.heavy {
  font-weight: 500;
}
.preview {
  width: 453px;
  height: 225px;
  margin-left: 1px;
  background: #000;
  box-shadow: 0 1px 0 #a8a8a8;
}
.dlg-foot {
  display: flex;
  justify-content: flex-end;
  gap: 14px;
  padding: 12px 14px 0 0;
}
.btn {
  box-sizing: border-box;
  width: 72px;
  height: 23px;
  padding: 0;
  background: #e1e1e1;
  border: 1px solid #adadad;
  color: #111;
  font: 12px "Liberation Sans", "Noto Sans CJK SC", sans-serif;
}
.primary {
  border: 2px solid #0a78d7;
}

.marks {
  position: absolute;
  top: 0;
  left: 0;
  pointer-events: none;
}
</style>
